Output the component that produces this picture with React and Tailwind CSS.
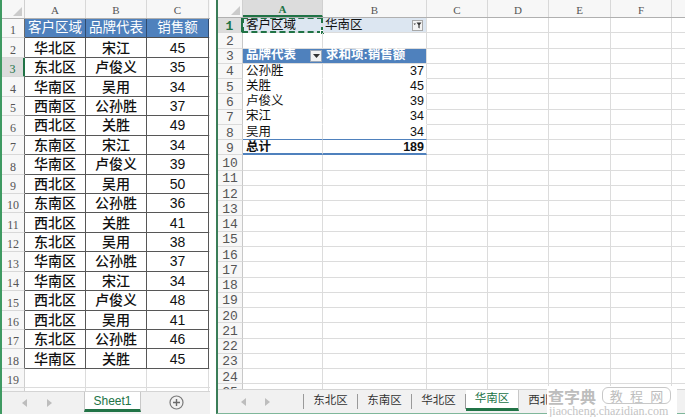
import React from 'react';

const F = "font-['Liberation_Sans','Noto_Sans_CJK_SC',sans-serif]";
const HF = "font-['Liberation_Serif','Noto_Sans_CJK_SC',serif]";

const leftRows = [
  ['华北区', '宋江', '45'],
  ['东北区', '卢俊义', '35'],
  ['华南区', '吴用', '34'],
  ['西南区', '公孙胜', '37'],
  ['西北区', '关胜', '49'],
  ['东南区', '宋江', '34'],
  ['华南区', '卢俊义', '39'],
  ['西北区', '吴用', '50'],
  ['东南区', '公孙胜', '36'],
  ['西北区', '关胜', '41'],
  ['东北区', '吴用', '38'],
  ['华南区', '公孙胜', '37'],
  ['华南区', '宋江', '34'],
  ['西北区', '卢俊义', '48'],
  ['西北区', '吴用', '41'],
  ['东北区', '公孙胜', '46'],
  ['华南区', '关胜', '45'],
];

const pivot = [
  ['公孙胜', '37'],
  ['关胜', '45'],
  ['卢俊义', '39'],
  ['宋江', '34'],
  ['吴用', '34'],
];

function CornerTri() {
  return (
    <svg width="9" height="9" viewBox="0 0 9 9">
      <path d="M9 0 L9 9 L0 9 Z" fill="#cbcbcb" />
    </svg>
  );
}

function ArrowL() {
  return (
    <svg width="5" height="8" viewBox="0 0 5 8">
      <path d="M5 0 L0 4 L5 8 Z" fill="#bdbdbd" />
    </svg>
  );
}

function ArrowR() {
  return (
    <svg width="5" height="8" viewBox="0 0 5 8">
      <path d="M0 0 L5 4 L0 8 Z" fill="#bdbdbd" />
    </svg>
  );
}

function LeftWindow() {
  const rows = [];
  for (let r = 1; r <= 20; r++) {
    const inTable = r <= 18;
    const sel = r === 3;
    const rh = sel
      ? 'bg-[#dcdcdc] text-[#217346] border-r-2 border-r-[#217346]'
      : inTable
      ? 'bg-[#f7f7f7] text-[#555] border-r border-r-[#6a6a6a]'
      : 'bg-[#f7f7f7] text-[#555] border-r border-r-[#cfcfcf]';
    let cells;
    if (r === 1) {
      cells = ['客户区域', '品牌代表', '销售额'].map((t, i) => (
        <div
          key={i}
          className={`flex ${i === 2 ? 'w-[62px]' : 'w-[61px]'} shrink-0 items-center justify-center border-r border-b border-r-[#2f4a6e] border-b-[#4d4d4d] bg-[#4f81bd] text-[13.5px] leading-none text-white`}
        >
          {t}
        </div>
      ));
    } else if (inTable) {
      cells = leftRows[r - 2].map((t, i) => (
        <div
          key={i}
          className={`flex ${i === 2 ? 'w-[62px]' : 'w-[61px]'} shrink-0 items-center justify-center border-r border-b border-[#575757] text-[14px] font-medium leading-none text-[#111]`}
        >
          {t}
        </div>
      ));
    } else {
      cells = [0, 1, 2].map((i) => (
        <div
          key={i}
          className={`${i === 2 ? 'w-[62px]' : 'w-[61px]'} shrink-0 border-r border-b border-[#dcdcdc]`}
        />
      ));
    }
    rows.push(
      <div key={r} className="flex h-[19.44px] shrink-0">
        <div
          className={`flex w-[23px] shrink-0 items-end justify-center border-b border-b-[#d8d8d8] pb-[1px] ${HF} text-[12px] leading-none ${rh}`}
        >
          {r}
        </div>
        {cells}
        <div className="flex-1 border-b border-[#dcdcdc]" />
      </div>
    );
  }

  return (
    <div className={`flex h-[414px] w-[210px] shrink-0 flex-col border-l-2 border-[#3f9a62] ${F}`}>
      <div className="flex h-[19px] shrink-0 border-b border-[#b0b0b0] bg-[#f7f7f7]">
        <div className="flex w-[23px] shrink-0 items-end justify-end border-r border-[#d0d0d0] pb-[2px] pr-[2px]">
          <CornerTri />
        </div>
        {['A', 'B', 'C'].map((c, i) => (
          <div
            key={c}
            className={`flex ${i === 2 ? 'w-[62px]' : 'w-[61px]'} shrink-0 items-center justify-center border-r border-[#d8d8d8] pt-[3px] ${HF} text-[11px] leading-none text-[#555]`}
          >
            {c}
          </div>
        ))}
        <div className="flex-1" />
      </div>
      <div className="flex flex-1 flex-col overflow-hidden">{rows}</div>
      <div className="flex h-[23px] shrink-0 items-start border-t border-[#d4d4d4] bg-[#f1f1f1]">
        <div className="ml-[20px] mt-[7px]">
          <ArrowL />
        </div>
        <div className="ml-[20px] mt-[7px]">
          <ArrowR />
        </div>
        <div className="ml-[32px] flex h-[20px] w-[57px] items-center justify-center border-x border-b-[3px] border-x-[#c8c8c8] border-b-[#217346] bg-white pt-[1px] text-[12px] leading-none text-[#217346]">
          Sheet1
        </div>
        <div className="ml-[28px] mt-[3px]">
          <svg width="15" height="15" viewBox="0 0 15 15">
            <circle cx="7.5" cy="7.5" r="6.5" fill="none" stroke="#7a7a7a" strokeWidth="1.2" />
            <path d="M7.5 4 V11 M4 7.5 H11" stroke="#6a6a6a" strokeWidth="1.4" />
          </svg>
        </div>
      </div>
    </div>
  );
}

const colW = ['w-[80px]', 'w-[104px]', 'w-[61px]', 'w-[61px]', 'w-[62px]', 'w-[61px]', 'w-[61px]'];

function FilterBtn() {
  return (
    <div className="mr-[3px] flex h-[11px] w-[11px] items-center justify-center border border-[#a8a8a8] bg-[#f4f4f4]">
      <svg width="9" height="7" viewBox="0 0 9 7">
        <path d="M0.5 1.5 L3 1.5 L1.75 3 Z" fill="#333" />
        <path d="M3.5 0.5 H8.5 L6.6 3 V6.5 L5.4 5.8 V3 Z" fill="#333" />
      </svg>
    </div>
  );
}

function DropBtn() {
  return (
    <div className="mr-[1px] flex h-[12px] w-[12px] items-center justify-center border border-[#9aa7b8] bg-[#f2f2f2]">
      <svg width="7" height="4" viewBox="0 0 7 4">
        <path d="M0 0 H7 L3.5 4 Z" fill="#333" />
      </svg>
    </div>
  );
}

function RightWindow() {
  const rows = [];
  for (let r = 1; r <= 25; r++) {
    const sel = r === 1;
    const cells = [];
    for (let c = 0; c < 7; c++) {
      const w = colW[c];
      let cls = 'border-r border-b border-[#dcdcdc]';
      let content = null;
      if (c <= 1) {
        if (r === 1) {
          cls = 'border-r border-b border-[#dcdcdc] bg-[#dce6f1]';
          content =
            c === 0 ? (
              <>
                <span className="pl-[3px] text-[12.5px] leading-none text-[#111]">客户区域</span>
                <div className="absolute -inset-[1px] border-2 border-dashed border-[#217346]" />
                <div className="absolute -bottom-[3px] -right-[3px] h-[5px] w-[5px] border border-white bg-[#217346]" />
              </>
            ) : (
              <>
                <span className="pl-[2px] text-[12.5px] leading-none text-[#111]">华南区</span>
                <div className="flex-1" />
                <FilterBtn />
              </>
            );
        } else if (r === 3) {
          cls = `bg-[#4f81bd] border-b border-[#dcdcdc] ${c === 1 ? 'border-r' : ''}`;
          content =
            c === 0 ? (
              <>
                <span className="pl-[3px] text-[12.5px] font-bold leading-none text-white">品牌代表</span>
                <div className="flex-1" />
                <DropBtn />
              </>
            ) : (
              <span className="pl-[3px] text-[12.5px] font-bold leading-none text-white">求和项:销售额</span>
            );
        } else if (r >= 4 && r <= 8) {
          cls = `border-r border-[#dcdcdc] ${r === 8 ? 'border-b border-b-[#4f81bd]' : 'border-b border-b-transparent'}`;
          const [n, v] = pivot[r - 4];
          content =
            c === 0 ? (
              <span className="pl-[3px] text-[12.5px] leading-none text-[#111]">{n}</span>
            ) : (
              <span className="ml-auto pr-[2px] text-[12.5px] leading-none text-[#111]">{v}</span>
            );
        } else if (r === 9) {
          cls = 'border-r border-[#dcdcdc] border-b-2 border-b-[#4f81bd]';
          content =
            c === 0 ? (
              <span className="pl-[3px] text-[12.5px] font-bold leading-none text-[#111]">总计</span>
            ) : (
              <span className="ml-auto pr-[2px] text-[12.5px] font-bold leading-none text-[#111]">189</span>
            );
        }
      }
      cells.push(
        <div key={c} className={`relative flex ${w} shrink-0 items-center ${cls}`}>
          {content}
        </div>
      );
    }
    rows.push(
      <div key={r} className="flex h-[15.27px] shrink-0">
        <div
          className={`flex w-[25px] shrink-0 items-center justify-center border-b border-b-[#dadada] pt-[2px] font-['Liberation_Mono',monospace] text-[13px] leading-none ${
            sel
              ? 'border-r-2 border-r-[#217346] bg-[#dcdcdc] font-bold text-[#217346]'
              : 'border-r border-r-[#c8c8c8] bg-[#f7f7f7] text-[#555]'
          }`}
        >
          {r}
        </div>
        {cells}
      </div>
    );
  }

  const tabs = ['东北区', '东南区', '华北区'];

  return (
    <div className={`ml-[6px] flex h-[414px] min-w-0 flex-1 flex-col overflow-hidden border-l-2 border-b border-l-[#3a7d58] border-b-[#7fb79a] ${F}`}>
      <div className="flex h-[18px] shrink-0 border-b border-[#b0b0b0] bg-[#f7f7f7]">
        <div className="flex w-[25px] shrink-0 items-end justify-end border-r border-[#d0d0d0] pb-[2px] pr-[2px]">
          <CornerTri />
        </div>
        {['A', 'B', 'C', 'D', 'E', 'F', 'G'].map((l, i) => (
          <div
            key={l}
            className={`flex ${colW[i]} shrink-0 items-center justify-center pt-[3px] ${HF} text-[11px] leading-none ${
              i === 0
                ? 'border-r border-r-[#d0d0d0] border-b-2 border-b-[#217346] bg-[#dcdcdc] font-bold text-[#217346]'
                : 'border-r border-[#d8d8d8] text-[#555]'
            }`}
          >
            {l}
          </div>
        ))}
      </div>
      <div className="flex flex-1 flex-col overflow-hidden">{rows}</div>
      <div className="flex h-[24px] shrink-0 items-start border-t border-[#d4d4d4] bg-[#f1f1f1]">
        <div className="ml-[23px] mt-[8px] shrink-0">
          <ArrowL />
        </div>
        <div className="ml-[19px] mt-[8px] shrink-0">
          <ArrowR />
        </div>
        <div className="ml-[33px] mt-[4px] h-[15px] w-px shrink-0 bg-[#9a9a9a]" />
        {tabs.map((t) => (
          <React.Fragment key={t}>
            <div className="flex h-[22px] w-[53px] shrink-0 items-center justify-center text-[11.5px] leading-none text-[#333]">
              {t}
            </div>
            <div className="mt-[4px] h-[15px] w-px shrink-0 bg-[#9a9a9a]" />
          </React.Fragment>
        ))}
        <div className="flex h-[21px] w-[53px] shrink-0 items-center justify-center border-r border-b-[3px] border-r-[#c8c8c8] border-b-[#217346] bg-white text-[11.5px] leading-none text-[#217346]">
          华南区
        </div>
        <div className="flex h-[22px] w-[53px] shrink-0 items-center justify-center text-[11.5px] leading-none text-[#333]">
          西北区
        </div>
      </div>
    </div>
  );
}

function Watermark() {
  return (
    <div className="absolute left-[547px] top-[386px] flex h-[31px] w-[130px] flex-col bg-white">
      <div className="flex h-[19px] shrink-0 items-center whitespace-nowrap pl-[1px] font-['Noto_Sans_CJK_SC',sans-serif]">
        <span className="shrink-0 text-[16px] font-bold leading-none text-[#bdbdbd]">查字典</span>
        <div className="ml-[6px] flex h-[17px] w-[69px] shrink-0 items-center justify-around rounded-[6px] border border-[#c8c8c8] px-[3px] text-[13px] leading-none text-[#bdbdbd]">
          <span>教</span>
          <span>程</span>
          <span>网</span>
        </div>
      </div>
      <div className="flex h-[12px] shrink-0 items-center whitespace-nowrap pl-[2px] font-['Liberation_Serif',serif] text-[12px] leading-none text-[#c4c4c4]">
        jiaocheng.chazidian.com
      </div>
    </div>
  );
}

export default function App() {
  return (
    <div className="relative flex h-[417px] w-[685px] overflow-hidden bg-white">
      <LeftWindow />
      <RightWindow />
      <Watermark />
    </div>
  );
}
